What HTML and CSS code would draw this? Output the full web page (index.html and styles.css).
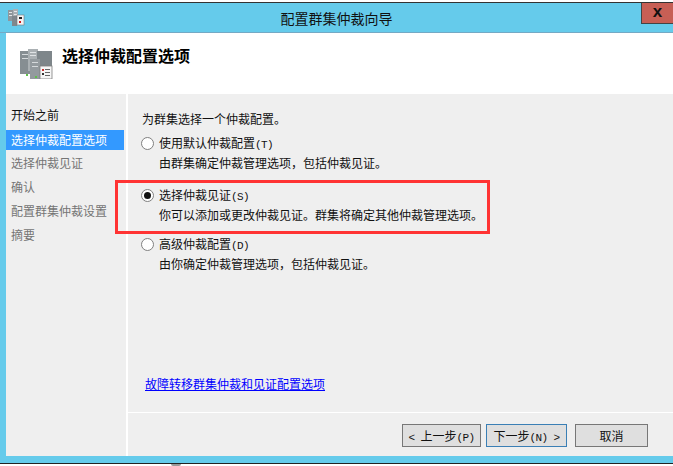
FILE: index.html
```html
<!DOCTYPE html>
<html lang="zh">
<head>
    <meta charset="UTF-8">
    <meta name="viewport" content="width=device-width, initial-scale=1.0">
    <title>配置群集仲裁向导</title>
    <link rel="stylesheet" href="styles.css">
</head>
<body>
    <div class="window">
        <div class="titlebar">
            <svg class="app-icon" width="17" height="17" viewBox="0 0 17 17">
                <rect x="0" y="1" width="5" height="11" fill="#8f979c"/>
                <rect x="5" y="0" width="5" height="10" fill="#a9b0b4"/>
                <rect x="1" y="3" width="3" height="1" fill="#e4e6e8"/>
                <rect x="1" y="6" width="3" height="1" fill="#e4e6e8"/>
                <rect x="6" y="2" width="3" height="1" fill="#e4e6e8"/>
                <rect x="6" y="5" width="3" height="1" fill="#e4e6e8"/>
                <rect x="4" y="7" width="5" height="10" fill="#7f878c"/>
                <rect x="9" y="6" width="7" height="10" fill="#f4f4f4" stroke="#777" stroke-width="0.6"/>
                <rect x="11" y="8" width="3" height="2" fill="#222"/>
                <rect x="11" y="12" width="2" height="2" fill="#d01818"/>
            </svg>
            <div class="title">配置群集仲裁向导</div>
            <div class="close">x</div>
        </div>

        <div class="client">
            <div class="header">
                <svg class="header-icon" width="33" height="31" viewBox="0 0 33 31">
                    <rect x="0" y="3" width="10" height="23" fill="#868e92"/>
                    <rect x="8" y="1" width="10" height="22" fill="#aab0b3"/>
                    <rect x="17" y="3" width="15" height="18" fill="#7e868a"/>
                    <rect x="10" y="11" width="10" height="20" fill="#939a9e"/>
                    <rect x="2" y="6" width="6" height="1" fill="#d5d9db"/>
                    <rect x="2" y="10" width="6" height="1" fill="#d5d9db"/>
                    <rect x="10" y="4" width="6" height="1" fill="#e0e3e5"/>
                    <rect x="10" y="7" width="6" height="1" fill="#e0e3e5"/>
                    <rect x="12" y="14" width="6" height="1" fill="#d5d9db"/>
                    <rect x="12" y="18" width="6" height="1" fill="#d5d9db"/>
                    <rect x="6" y="26" width="2" height="2" fill="#5fc04a"/>
                    <rect x="15" y="28" width="2" height="2" fill="#5fc04a"/>
                    <rect x="20" y="18" width="12" height="13" fill="#f6f6f6" stroke="#7d7d7d" stroke-width="0.8"/>
                    <rect x="22" y="21" width="2" height="2" fill="#c83030"/>
                    <rect x="22" y="25" width="2" height="2" fill="#333"/>
                    <rect x="25" y="21" width="5" height="1" fill="#666"/>
                    <rect x="25" y="24" width="5" height="1" fill="#666"/>
                    <rect x="25" y="27" width="5" height="1" fill="#666"/>
                </svg>
                <h1 class="heading">选择仲裁配置选项</h1>
            </div>

            <div class="body">
                <ul class="steps">
                    <li class="step done">开始之前</li>
                    <li class="step active">选择仲裁配置选项</li>
                    <li class="step">选择仲裁见证</li>
                    <li class="step">确认</li>
                    <li class="step">配置群集仲裁设置</li>
                    <li class="step">摘要</li>
                </ul>

                <div class="main">
                    <div class="content">
                        <p class="intro">为群集选择一个仲裁配置。</p>
                        <div class="option">
                            <span class="radio"></span>
                            <div>
                                <p class="label">使用默认仲裁配置<span class="key">(T)</span></p>
                                <p class="desc">由群集确定仲裁管理选项，包括仲裁见证。</p>
                            </div>
                        </div>
                        <div class="option">
                            <span class="radio checked"></span>
                            <div>
                                <p class="label">选择仲裁见证<span class="key">(S)</span></p>
                                <p class="desc">你可以添加或更改仲裁见证。群集将确定其他仲裁管理选项。</p>
                            </div>
                        </div>
                        <div class="option near">
                            <span class="radio"></span>
                            <div>
                                <p class="label">高级仲裁配置<span class="key">(D)</span></p>
                                <p class="desc">由你确定仲裁管理选项，包括仲裁见证。</p>
                            </div>
                        </div>
                        <a class="link" href="#">故障转移群集仲裁和见证配置选项</a>
                    </div>
                    <div class="buttons">
                        <button class="btn"><span class="key">&lt; </span>上一步<span class="key">(P)</span></button>
                        <button class="btn default">下一步<span class="key">(N) &gt;</span></button>
                        <button class="btn cancel">取消</button>
                    </div>
                </div>
            </div>
        </div>
        <div class="highlight"></div>
    </div>
    <div class="tip"></div>
</body>
</html>
```

FILE: styles.css
```css
* {
    box-sizing: border-box;
}
html, body {
    margin: 0;
    height: 100%;
}
body {
    background: #fff;
    font-family: "Noto Sans CJK SC", "Liberation Sans", sans-serif;
    font-size: 12px;
    color: #111;
    overflow: hidden;
    position: relative;
}
.window {
    position: relative;
    width: 673px;
    height: 462px;
    margin-top: 2px;
    border-top: 1px solid #333;
    border-bottom: 1px solid #222;
    background: #65cbeb;
    display: flex;
    flex-direction: column;
}
.titlebar {
    height: 30px;
    border-bottom: 1px solid #74a9c4;
    display: flex;
    position: relative;
    justify-content: center;
}
.app-icon {
    position: absolute;
    left: 8px;
    top: 6px;
}
.title {
    font-size: 14px;
    line-height: 30px;
}
.close {
    position: absolute;
    right: 0;
    top: 0;
    width: 32px;
    height: 21px;
    background: #c75f55;
    border-left: 1px solid #444;
    border-bottom: 1px solid #444;
    text-align: center;
    font: bold 17px/18px "Liberation Sans", sans-serif;
    color: #111;
}
.client {
    margin-left: 6px;
    height: 423px;
    background: #fff;
    display: flex;
    flex-direction: column;
}
.header {
    height: 61px;
    display: flex;
    padding: 15px 0 0 14px;
    gap: 9px;
}
.heading {
    margin: -2px 0 0;
    font-size: 16px;
    font-weight: bold;
    line-height: 18px;
    color: #000;
}
.body {
    flex: 1;
    display: flex;
    gap: 2px;
}
.steps {
    list-style: none;
    width: 120px;
    margin: 0;
    padding: 9px 0 0;
    background: #efefef;
    color: #757575;
}
.step {
    height: 24px;
    line-height: 24px;
    padding-left: 5px;
}
.step.done {
    color: #111;
    margin-bottom: 3px;
}
.step.active {
    height: 20px;
    line-height: 20px;
    margin: 0 2px 1px 0;
    background: #3399ff;
    color: #fff;
}
.main {
    flex: 1;
    display: flex;
    flex-direction: column;
    background: #efefef;
}
.content {
    height: 319px;
    border-bottom: 1px solid #fff;
    padding: 16px 0 0 13px;
}
.intro {
    margin: 0 0 6px 1px;
    line-height: 18px;
}
.option {
    display: flex;
    gap: 5px;
    margin-bottom: 14px;
    height: 38px;
}
.option.near {
    margin-top: -3px;
}
.label, .desc {
    margin: 0;
    line-height: 18px;
}
.key {
    font-family: "Liberation Mono", monospace;
    font-size: 11px;
    letter-spacing: -0.6px;
    white-space: pre;
}
.radio {
    width: 13px;
    height: 13px;
    margin-top: 3px;
    border: 1px solid #808080;
    border-radius: 50%;
    background: #fff;
    position: relative;
}
.radio.checked::after {
    content: "";
    position: absolute;
    left: 2px;
    top: 2px;
    width: 7px;
    height: 7px;
    border-radius: 50%;
    background: #111;
}
.link {
    display: inline-block;
    margin: 89px 0 0 4px;
    color: #0000ff;
    line-height: 16px;
}
.buttons {
    display: flex;
    padding: 11px 0 0 274px;
    gap: 5px;
}
.btn {
    width: 79px;
    height: 23px;
    padding: 0;
    font: inherit;
    color: #111;
    background: #dfdfdf;
    border: 1px solid #777;
}
.btn.default {
    width: 81px;
    border-color: #3a7fb5;
}
.btn.cancel {
    width: 73px;
    margin-left: 3px;
}
.highlight {
    position: absolute;
    left: 115px;
    top: 177px;
    width: 375px;
    height: 54px;
    border: 3px solid #ff3333;
}
.tip {
    position: absolute;
    left: 171px;
    top: 464px;
    width: 10px;
    height: 2px;
    background: #999;
    border-radius: 0 0 5px 5px;
}
```
